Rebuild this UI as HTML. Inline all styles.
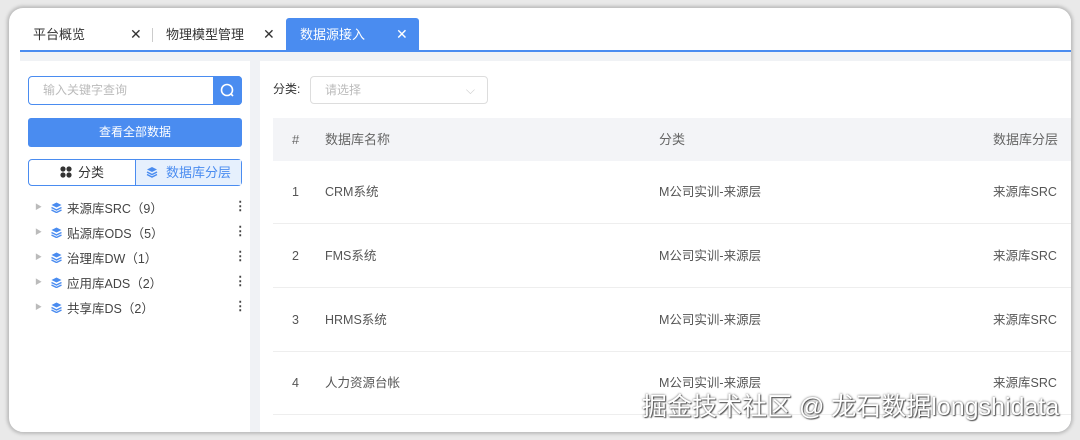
<!DOCTYPE html>
<html><head><meta charset="utf-8"><style>
*{margin:0;padding:0;box-sizing:border-box}
body{width:1080px;height:440px;background:#e9e9e9;font-family:"Liberation Sans","Noto Sans CJK SC",sans-serif;position:relative;overflow:hidden;color:#333}
.card{position:absolute;left:9px;top:8px;width:1062px;height:424px;background:#fff;border-radius:14px;box-shadow:0 0 3px 2px #bbb;overflow:hidden}
.tabs{position:absolute;left:11px;top:10px;right:0;height:34px;background:#fff;border-bottom:2px solid #4a8cf0}
.tab{position:absolute;top:0;height:33px;font-size:13px;line-height:33px;color:#333}
.gray{position:absolute;left:11px;top:44px;right:0;bottom:0;background:#f0f2f5}
.lp{position:absolute;left:11px;top:53px;width:230px;height:371px;background:#fff}
.rp{position:absolute;left:251px;top:53px;right:0;height:371px;background:#fff}
.abs{position:absolute}
.ly{position:absolute;left:31px;top:4px}
</style></head><body>
<div class="card">
<div class="tabs">
 <div class="tab" style="left:13px">平台概览</div>
 <div class="tab" style="left:110px;font-size:14px">✕</div>
 <div class="abs" style="left:132px;top:10px;width:1px;height:14px;background:#ccc"></div>
 <div class="tab" style="left:146px">物理模型管理</div>
 <div class="tab" style="left:243px;font-size:14px">✕</div>
 <div class="tab" style="left:266px;width:133px;background:#4a8cf0;color:#fff;border-radius:3px 3px 0 0;padding-left:14px">数据源接入<span style="position:absolute;left:110px;font-size:14px">✕</span></div>
</div>
<div class="gray"></div>
<div class="lp">
 <div class="abs" style="left:8px;top:15px;width:214px;height:29px;border:1px solid #4a8cf0;border-radius:4px;font-size:12px;color:#bbb;line-height:27px;padding-left:14px">输入关键字查询</div>
 <div class="abs" style="left:193px;top:15px;width:29px;height:29px;background:#4a8cf0;border-radius:0 4px 4px 0"><svg width="29" height="29"><circle cx="14" cy="14" r="5.5" fill="none" stroke="#fff" stroke-width="1.6"/><path d="M18 18l2 2" stroke="#fff" stroke-width="1.6"/></svg></div>
 <div class="abs" style="left:8px;top:57px;width:214px;height:29px;background:#4a8cf0;border-radius:3px;color:#fff;font-size:12px;text-align:center;line-height:29px">查看全部数据</div>
 <div class="abs" style="left:8px;top:98px;width:214px;height:27px;border:1px solid #4a8cf0;border-radius:4px;font-size:13px;line-height:25px">
  <div class="abs" style="left:0;top:0;width:106px;height:25px;text-align:center;color:#333"><svg width="12" height="12" style="vertical-align:-1px;margin-right:6px"><circle cx="3" cy="3" r="2.6" fill="#333"/><circle cx="9" cy="3" r="2.6" fill="#333"/><circle cx="3" cy="9" r="2.6" fill="#333"/><circle cx="9" cy="9" r="2.6" fill="#333"/></svg>分类</div>
  <div class="abs" style="left:106px;top:0;width:106px;height:25px;background:#e6f0fd;border-left:1px solid #4a8cf0;text-align:center;color:#4a8cf0"><svg width="12" height="12" style="vertical-align:-1px;margin-right:8px"><path d="M6 1L11 3.5 6 6 1 3.5Z" fill="#4a8cf0"/><path d="M1 6L6 8.5 11 6M1 8.5L6 11 11 8.5" fill="none" stroke="#4a8cf0" stroke-width="1.5"/></svg>数据库分层</div>
 </div>
 <div style="position:absolute;left:0;top:137px;width:230px;font-size:12.5px;color:#444">
  <div style="height:25px;position:relative"><span class="abs" style="left:15px;color:#bbb;font-size:7px;top:4px">▶</span><svg class="ly" width="11" height="11"><path d="M5.5 0.5L10.5 3 5.5 5.5 0.5 3Z" fill="#4a8cf0"/><path d="M0.5 5.5L5.5 8 10.5 5.5M0.5 8L5.5 10.5 10.5 8" fill="none" stroke="#4a8cf0" stroke-width="1.4"/></svg><span class="abs" style="left:47px">来源库SRC（9）</span><span class="abs" style="left:214px;font-weight:bold">⋮</span></div>
  <div style="height:25px;position:relative"><span class="abs" style="left:15px;color:#bbb;font-size:7px;top:4px">▶</span><svg class="ly" width="11" height="11"><path d="M5.5 0.5L10.5 3 5.5 5.5 0.5 3Z" fill="#4a8cf0"/><path d="M0.5 5.5L5.5 8 10.5 5.5M0.5 8L5.5 10.5 10.5 8" fill="none" stroke="#4a8cf0" stroke-width="1.4"/></svg><span class="abs" style="left:47px">贴源库ODS（5）</span><span class="abs" style="left:214px;font-weight:bold">⋮</span></div>
  <div style="height:25px;position:relative"><span class="abs" style="left:15px;color:#bbb;font-size:7px;top:4px">▶</span><svg class="ly" width="11" height="11"><path d="M5.5 0.5L10.5 3 5.5 5.5 0.5 3Z" fill="#4a8cf0"/><path d="M0.5 5.5L5.5 8 10.5 5.5M0.5 8L5.5 10.5 10.5 8" fill="none" stroke="#4a8cf0" stroke-width="1.4"/></svg><span class="abs" style="left:47px">治理库DW（1）</span><span class="abs" style="left:214px;font-weight:bold">⋮</span></div>
  <div style="height:25px;position:relative"><span class="abs" style="left:15px;color:#bbb;font-size:7px;top:4px">▶</span><svg class="ly" width="11" height="11"><path d="M5.5 0.5L10.5 3 5.5 5.5 0.5 3Z" fill="#4a8cf0"/><path d="M0.5 5.5L5.5 8 10.5 5.5M0.5 8L5.5 10.5 10.5 8" fill="none" stroke="#4a8cf0" stroke-width="1.4"/></svg><span class="abs" style="left:47px">应用库ADS（2）</span><span class="abs" style="left:214px;font-weight:bold">⋮</span></div>
  <div style="height:25px;position:relative"><span class="abs" style="left:15px;color:#bbb;font-size:7px;top:4px">▶</span><svg class="ly" width="11" height="11"><path d="M5.5 0.5L10.5 3 5.5 5.5 0.5 3Z" fill="#4a8cf0"/><path d="M0.5 5.5L5.5 8 10.5 5.5M0.5 8L5.5 10.5 10.5 8" fill="none" stroke="#4a8cf0" stroke-width="1.4"/></svg><span class="abs" style="left:47px">共享库DS（2）</span><span class="abs" style="left:214px;font-weight:bold">⋮</span></div>
 </div>
</div>
<div class="rp">
 <div class="abs" style="left:13px;top:21px;font-size:12px;line-height:14px">分类:</div>
 <div class="abs" style="left:50px;top:15px;width:178px;height:28px;border:1px solid #ddd;border-radius:4px;font-size:12px;color:#bbb;line-height:26px;padding-left:14px">请选择<span style="position:absolute;right:12px;color:#ccc">⌵</span></div>
 <div class="abs" style="left:13px;top:57px;right:0;height:43px;background:#f3f4f7;font-size:13px;color:#666;line-height:43px">
  <span class="abs" style="left:19px">#</span><span class="abs" style="left:52px">数据库名称</span><span class="abs" style="left:386px">分类</span><span class="abs" style="left:720px">数据库分层</span>
 </div>
 <div class="abs" style="left:13px;top:100px;right:0;font-size:12.5px;color:#555">
  <div style="height:63px;position:relative;border-bottom:1px solid #eee;line-height:63px"><span class="abs" style="left:19px">1</span><span class="abs" style="left:52px">CRM系统</span><span class="abs" style="left:386px">M公司实训-来源层</span><span class="abs" style="left:720px">来源库SRC</span></div>
  <div style="height:64px;position:relative;border-bottom:1px solid #eee;line-height:64px"><span class="abs" style="left:19px">2</span><span class="abs" style="left:52px">FMS系统</span><span class="abs" style="left:386px">M公司实训-来源层</span><span class="abs" style="left:720px">来源库SRC</span></div>
  <div style="height:64px;position:relative;border-bottom:1px solid #eee;line-height:64px"><span class="abs" style="left:19px">3</span><span class="abs" style="left:52px">HRMS系统</span><span class="abs" style="left:386px">M公司实训-来源层</span><span class="abs" style="left:720px">来源库SRC</span></div>
  <div style="height:63px;position:relative;border-bottom:1px solid #eee;line-height:63px"><span class="abs" style="left:19px">4</span><span class="abs" style="left:52px">人力资源台帐</span><span class="abs" style="left:386px">M公司实训-来源层</span><span class="abs" style="left:720px">来源库SRC</span></div>
 </div>
</div>
</div>
<div class="abs" style="left:642px;top:392px;font-size:25px;line-height:30px;color:#fff;text-shadow:0 0 2px #555,1px 1px 1px #555;white-space:nowrap">掘金技术社区 @ 龙石数据longshidata</div>
</body></html>
